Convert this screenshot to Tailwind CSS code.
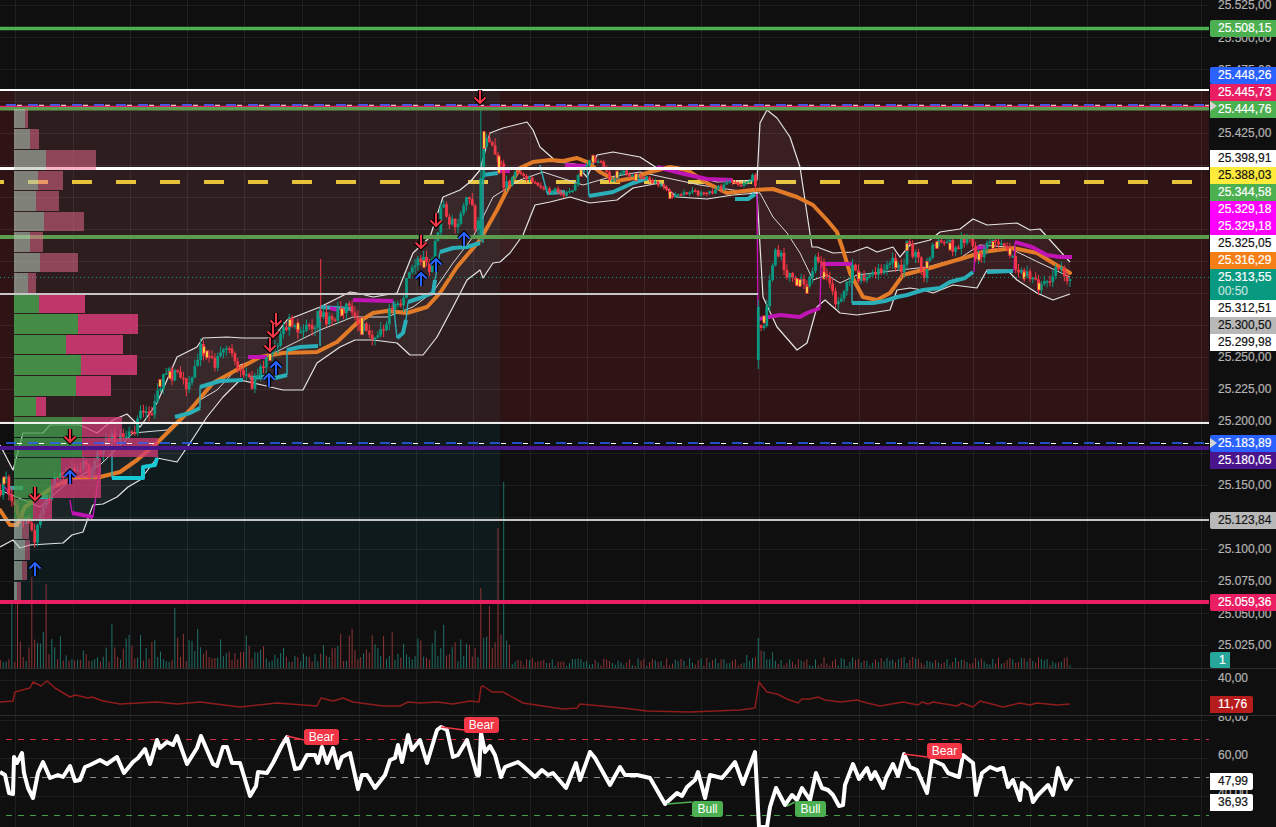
<!DOCTYPE html>
<html lang="en">
<head>
<meta charset="utf-8">
<title>Chart</title>
<script src="https://cdn.jsdelivr.net/npm/@tailwindcss/browser@4"></script>
</head>
<body class="bg-[#0f0f0f]">
<div class="w-[1276px] h-[827px] flex flex-col overflow-hidden bg-[#0f0f0f] font-['Liberation_Sans',Arial,sans-serif] text-[12px]">

  <!-- MAIN PANE -->
  <div class="h-[669px] flex border-b border-[#2e2e2e] shrink-0">
    <div class="w-[1210px] h-full relative">
      <svg class="block w-full h-full" viewBox="0 0 1210 668" xmlns="http://www.w3.org/2000/svg">
        <defs>
          <g id="adn"><path d="M0,-7V6M-5.5,0.5L0,6L5.5,0.5" fill="none" stroke="#000" stroke-width="4.4"/><path d="M0,-7V6M-5.5,0.5L0,6L5.5,0.5" fill="none" stroke="#f23645" stroke-width="2"/></g>
          <g id="aup"><path d="M0,7V-6M-5.5,-0.5L0,-6L5.5,-0.5" fill="none" stroke="#000" stroke-width="4.4"/><path d="M0,7V-6M-5.5,-0.5L0,-6L5.5,-0.5" fill="none" stroke="#2962ff" stroke-width="2"/></g>
        </defs>
        <!-- zones -->
        <rect x="0" y="91" width="1209" height="332" fill="#2f1416"/>
        <rect x="14" y="91" width="486" height="332" fill="#2e1d1f"/>
        <rect x="14" y="424" width="486" height="176" fill="#0f1a1d"/>
        <!-- grid -->
        <path stroke="#ffffff" stroke-opacity="0.07" d="M15.5 0V668M73.5 0V668M130.5 0V668M187.5 0V668M244.5 0V668M302.5 0V668M359.5 0V668M416.5 0V668M473.5 0V668M530.5 0V668M587.5 0V668M644.5 0V668M701.5 0V668M759.5 0V668M859.5 0V668M916.5 0V668M973.5 0V668M1030.5 0V668M1087.5 0V668M1144.5 0V668M1201.5 0V668"/>
        <path stroke="#ffffff" stroke-opacity="0.07" d="M0 5.5H1209M0 37.5H1209M0 69.5H1209M0 101.5H1209M0 133.5H1209M0 165.5H1209M0 197.5H1209M0 229.5H1209M0 261.5H1209M0 293.5H1209M0 325.5H1209M0 357.5H1209M0 389.5H1209M0 421.5H1209M0 453.5H1209M0 485.5H1209M0 517.5H1209M0 549.5H1209M0 581.5H1209M0 613.5H1209M0 645.5H1209"/>
        <!-- yellow dashes behind price -->
        <line x1="-16" x2="1192" y1="182" y2="182" stroke="#e8c33a" stroke-width="4" stroke-dasharray="20 24"/>
        <!-- bollinger fill and bands -->
        <polygon id="bbfill" fill="#ffffff" fill-opacity="0.05" points=""/>
        <polyline id="bbu" fill="none" stroke="#e4e4e4" stroke-width="1.2" stroke-linejoin="round" points="0,445 13,470 23,433 43,433 50,425 80,425 97,433 113,420 127,414 140,427 157,403 177,357 197,347 203,338 227,337 243,338 250,338 273,338 287,320 320,307 350,292 357,293 373,297 397,293 413,253 430,237 443,197 460,190 470,182 480,170 490,133 503,128 527,122 533,130 540,147 557,162 575,164 587,177 597,155 613,152 640,157 657,168 677,167 700,178 717,182 757,180 760,123 767,110 777,118 790,137 800,167 812,247 817,247 833,253 853,252 867,247 877,252 893,247 900,257 910,245 930,240 940,232 960,229 973,219 987,225 1017,223 1030,230 1040,229 1050,240 1070,262"/>
        <polyline id="bbl" fill="none" stroke="#e4e4e4" stroke-width="1.2" stroke-linejoin="round" points="0,547 13,540 20,548 30,545 63,543 72,535 83,532 90,513 93,505 103,504 117,497 128,487 140,480 157,458 177,462 190,443 207,417 223,397 240,380 262,385 283,390 303,390 317,363 340,347 355,340 373,340 397,343 410,355 423,355 437,337 453,307 467,280 480,270 483,278 493,263 500,262 510,253 523,235 535,205 550,202 570,197 590,203 617,200 633,188 660,183 677,197 707,199 733,195 757,193 763,297 777,327 797,350 807,343 817,307 825,300 840,313 857,315 877,312 890,310 897,290 910,288 923,290 933,293 953,285 977,288 987,270 1007,270 1017,280 1037,293 1053,300 1070,294"/>
        <polyline fill="none" stroke="#d8d8d8" stroke-width="1" stroke-linejoin="round" points="0,490 40,507 67,483 100,465 133,433 167,430 200,400 217,390 233,373 240,365 270,355 320,330 353,317 387,317 413,307 433,292 453,263 473,237 493,197 520,180 543,172 583,185 610,177 640,172 667,178 700,185 733,190 760,193 773,217 787,233 800,253 813,280 827,275 840,283 857,275 900,270 927,267 960,258 980,245 1007,247 1040,263 1070,277"/>
        <!-- orange average -->
        <polyline fill="none" stroke="#e27b28" stroke-width="4" stroke-linejoin="round" stroke-linecap="round" points="0,510 10,525 17,525 25,507 53,487 73,478 100,477 120,472 137,460 157,443 177,423 190,410 213,383 240,368 260,357 283,353 317,352 337,342 357,323 373,313 387,311 407,313 427,307 440,293 457,267 480,240 497,210 507,190 520,168 533,162 550,160 563,161 577,158 587,162 600,172 617,181 633,178 650,172 670,167 687,170 707,183 727,193 753,190 773,189 797,197 813,205 827,220 837,232 843,250 850,273 863,297 877,300 890,293 903,275 930,268 950,262 967,257 983,252 1013,248 1037,253 1053,263 1070,273"/>
        <!-- teal steps -->
        <g fill="none" stroke="#2aaeb8" stroke-linejoin="round">
          <path stroke-width="1.4" d="M200 408V387M287 375V350M320 346V307M393 301L397 338M406 320L408 302M435 280L440 252M483 243V175M540 165L547 193M589 196L587 166M852 264V303M112 443V478"/>
          <g stroke-width="4">
            <polyline points="10,488 23,488"/>
            <polyline points="30,497 48,497"/>
            <polyline stroke="#16c7d4" points="112,478 143,478 143,467 155,465 157,458"/>
            <polyline points="175,417 190,413 200,408"/>
            <polyline points="200,387 220,381 243,380"/>
            <polyline points="250,378 262,377 275,378 287,375"/>
            <polyline points="287,350 300,347 318,346"/>
            <polyline points="320,307 352,309"/>
            <polyline points="397,338 403,333 406,320"/>
            <polyline points="408,302 420,298 433,293 435,280"/>
            <polyline points="440,252 453,248 467,247 480,243"/>
            <polyline points="483,175 498,173"/>
            <polyline points="547,193 565,192"/>
            <polyline points="589,196 613,192 633,183 648,178"/>
            <polyline points="735,199 748,199 755,194"/>
            <polyline points="852,303 873,303 885,301 897,297 907,295 923,290 940,288 950,282 965,278 973,272"/>
            <polyline points="987,272 1013,271"/>
          </g>
        </g>
        <!-- magenta steps -->
        <g fill="none" stroke="#c014b4" stroke-linejoin="round">
          <path stroke-width="1.4" d="M5 487L12 498M70 500L72 513M93 517L100 467M757 194L758 319M820 308L821 264M974 272L975 248M1014 271L1015 242"/>
          <g stroke-width="4">
            <polyline points="72,513 93,517"/>
            <polyline points="248,357 267,357"/>
            <polyline points="330,308 338,310"/>
            <polyline points="353,300 393,301"/>
            <polyline points="500,171 510,171"/>
            <polyline points="565,165 587,166"/>
            <polyline points="657,167 680,173 707,179 732,180"/>
            <polyline points="758,319 780,315 800,317 807,313 820,308"/>
            <polyline points="821,264 852,264"/>
            <polyline points="975,248 987,247"/>
            <polyline points="1015,242 1032,247 1047,255 1060,257 1072,257"/>
          </g>
        </g>
        <!-- candles and volume are filled in from the data below -->
        <path id="wkg" fill="none" stroke="#089981" stroke-width="1"/>
        <path id="wkr" fill="none" stroke="#f23645" stroke-width="1"/>
        <path id="bdg" fill="#089981"/>
        <path id="bdr" fill="#f23645"/>
        <g id="yl"></g>
        <path id="vg" fill="none" stroke="#1e7068" stroke-width="1"/>
        <path id="vr" fill="none" stroke="#8f3436" stroke-width="1"/>
        <!-- top levels -->
        <line x1="0" x2="1209" y1="28.5" y2="28.5" stroke="#4caf50" stroke-width="3.4"/>
        <line x1="0" x2="1209" y1="90" y2="90" stroke="#ffffff" stroke-width="2"/>
        <line x1="6" x2="1209" y1="105" y2="105" stroke="#3d5af1" stroke-width="2" stroke-dasharray="10 12"/>
        <line x1="17" x2="1209" y1="105.4" y2="105.4" stroke="#f5e6e6" stroke-width="1.4" stroke-dasharray="5 17"/>
        <line x1="0" x2="1209" y1="106.4" y2="106.4" stroke="#e91e63" stroke-width="1.4"/>
        <line x1="0" x2="1209" y1="108.7" y2="108.7" stroke="#5d9c4f" stroke-width="3.6"/>
        <line x1="0" x2="1209" y1="168.5" y2="168.5" stroke="#ffffff" stroke-width="3"/>
        <line x1="0" x2="1209" y1="237" y2="237" stroke="#5d9c4f" stroke-width="4"/>
        <line x1="0" x2="1209" y1="277.5" y2="277.5" stroke="#089981" stroke-width="1" stroke-dasharray="1 3"/>
        <line x1="0" x2="758" y1="294" y2="294" stroke="#c6c6c6" stroke-width="2"/>
        <!-- volume profile -->
        <g fill="#b5c5b5" fill-opacity="0.6">
          <rect x="14" y="109" width="11" height="19"/><rect x="14" y="129" width="16" height="20"/><rect x="14" y="150" width="32" height="20"/><rect x="14" y="171" width="24" height="19"/><rect x="14" y="191" width="22" height="20"/><rect x="14" y="212" width="30" height="19"/><rect x="14" y="232" width="16" height="20"/><rect x="14" y="253" width="26" height="19"/><rect x="14" y="273" width="14" height="20"/>
          <rect x="14" y="521" width="8" height="18"/><rect x="14" y="540" width="11" height="20"/><rect x="14" y="561" width="8" height="19"/><rect x="14" y="582" width="3" height="18"/>
        </g>
        <g fill="#ee6e90" fill-opacity="0.5">
          <rect x="25" y="109" width="3" height="19"/><rect x="30" y="129" width="9" height="20"/><rect x="46" y="150" width="50" height="20"/><rect x="38" y="171" width="25" height="19"/><rect x="36" y="191" width="23" height="20"/><rect x="44" y="212" width="40" height="19"/><rect x="30" y="232" width="13" height="20"/><rect x="40" y="253" width="38" height="19"/><rect x="28" y="273" width="8" height="20"/>
          <rect x="22" y="521" width="7" height="18"/><rect x="25" y="540" width="5" height="20"/><rect x="22" y="561" width="5" height="19"/><rect x="17" y="582" width="4" height="18"/>
        </g>
        <g fill="#479d4b">
          <rect x="14" y="295" width="25" height="18" fill-opacity="0.87"/><rect x="14" y="314" width="64" height="20" fill-opacity="0.87"/><rect x="14" y="335" width="52" height="19" fill-opacity="0.87"/><rect x="14" y="355" width="67" height="20" fill-opacity="0.87"/><rect x="14" y="376" width="62" height="20" fill-opacity="0.87"/><rect x="14" y="397" width="22" height="19" fill-opacity="0.87"/>
          <g fill-opacity="0.76"><rect x="14" y="417" width="68" height="20"/><rect x="14" y="438" width="68" height="19"/><rect x="14" y="458" width="47" height="20"/><rect x="14" y="479" width="37" height="19"/><rect x="14" y="499" width="19" height="20"/></g>
        </g>
        <g fill="#d43b75">
          <rect x="39" y="295" width="46" height="18" fill-opacity="0.87"/><rect x="78" y="314" width="60" height="20" fill-opacity="0.87"/><rect x="66" y="335" width="57" height="19" fill-opacity="0.87"/><rect x="81" y="355" width="56" height="20" fill-opacity="0.87"/><rect x="76" y="376" width="35" height="20" fill-opacity="0.87"/><rect x="36" y="397" width="10" height="19" fill-opacity="0.87"/>
          <g fill-opacity="0.76"><rect x="82" y="417" width="40" height="20"/><rect x="82" y="438" width="76" height="19"/><rect x="61" y="458" width="40" height="20"/><rect x="51" y="479" width="50" height="19"/><rect x="33" y="499" width="19" height="20"/></g>
        </g>
        <!-- lower levels -->
        <line x1="0" x2="1209" y1="423" y2="423" stroke="#ffffff" stroke-opacity="0.92" stroke-width="2"/>
        <line x1="6" x2="1209" y1="443" y2="443" stroke="#2962ff" stroke-width="1.6" stroke-dasharray="10 12"/>
        <line x1="17" x2="1209" y1="443.5" y2="443.5" stroke="#ffffff" stroke-width="1.2" stroke-dasharray="5 17"/>
        <line x1="0" x2="1209" y1="448" y2="448" stroke="#4a148c" stroke-width="4"/>
        <line x1="0" x2="1209" y1="520" y2="520" stroke="#c6c6c6" stroke-width="2"/>
        <line x1="0" x2="1209" y1="602" y2="602" stroke="#e91e63" stroke-width="4"/>
        <!-- signal arrows -->
        <use href="#adn" x="70" y="436"/><use href="#aup" x="70" y="477"/>
        <use href="#adn" x="35" y="494"/><use href="#aup" x="35" y="569"/>
        <use href="#adn" x="276" y="320"/><use href="#adn" x="273" y="331"/><use href="#adn" x="270" y="345"/>
        <use href="#aup" x="276" y="368"/><use href="#aup" x="269" y="380"/>
        <use href="#adn" x="421" y="242"/><use href="#aup" x="421" y="279"/>
        <use href="#adn" x="436" y="220"/><use href="#aup" x="436" y="265"/>
        <use href="#aup" x="464" y="239"/><use href="#adn" x="480" y="97"/>
      </svg>
    </div>
    <div class="w-[66px] h-full relative overflow-hidden text-[#b2b2b2] [-webkit-text-stroke:0.2px]">
      <div class="absolute top-[-3px] left-2 leading-[17px]">25.525,00</div>
      <div class="absolute top-[30px] left-2 leading-[17px]">25.500,00</div>
      <div class="absolute top-[62px] left-2 leading-[17px]">25.475,00</div>
      <div class="absolute top-[125px] left-2 leading-[17px]">25.425,00</div>
      <div class="absolute top-[349px] left-2 leading-[17px]">25.250,00</div>
      <div class="absolute top-[381px] left-2 leading-[17px]">25.225,00</div>
      <div class="absolute top-[413px] left-2 leading-[17px]">25.200,00</div>
      <div class="absolute top-[477px] left-2 leading-[17px]">25.150,00</div>
      <div class="absolute top-[541px] left-2 leading-[17px]">25.100,00</div>
      <div class="absolute top-[573px] left-2 leading-[17px]">25.075,00</div>
      <div class="absolute top-[606px] left-2 leading-[17px]">25.050,00</div>
      <div class="absolute top-[637px] left-2 leading-[17px]">25.025,00</div>
      <div class="absolute inset-0 flex flex-col leading-[17px] font-normal">
        <div class="h-[17px] pl-2 mt-[20px] bg-[#4caf50] text-white rounded-l-[2px]">25.508,15</div>
        <div class="h-[17px] pl-2 mt-[30px] bg-[#2962ff] text-white rounded-l-[2px]">25.448,26</div>
        <div class="h-[17px] pl-2 bg-[#e91e63] text-white">25.445,73</div>
        <div class="h-[17px] pl-2 bg-[#4caf50] text-white">25.444,76</div>
        <div class="h-[17px] pl-2 mt-[32px] bg-white text-[#131313]">25.398,91</div>
        <div class="h-[17px] pl-2 bg-[#ffeb3b] text-[#131313]">25.388,03</div>
        <div class="h-[17px] pl-2 bg-[#4caf50] text-white">25.344,58</div>
        <div class="h-[17px] pl-2 bg-[#ff00ff] text-white">25.329,18</div>
        <div class="h-[17px] pl-2 bg-[#ff00ff] text-white">25.329,18</div>
        <div class="h-[17px] pl-2 bg-white text-[#131313]">25.325,05</div>
        <div class="h-[17px] pl-2 bg-[#f57f17] text-white">25.316,29</div>
        <div class="h-[31px] pl-2 bg-[#089981] text-white leading-[14px] pt-[1px]">25.313,55<div class="text-white/70">00:50</div></div>
        <div class="h-[17px] pl-2 bg-white text-[#131313]">25.312,51</div>
        <div class="h-[17px] pl-2 bg-[#b8b8b8] text-[#131313]">25.300,50</div>
        <div class="h-[17px] pl-2 bg-white text-[#131313]">25.299,98</div>
        <div class="h-[17px] pl-2 mt-[84px] bg-[#2962ff] text-white rounded-l-[2px]">25.183,89</div>
        <div class="h-[17px] pl-2 bg-[#4a148c] text-white">25.180,05</div>
        <div class="h-[17px] pl-2 mt-[43px] bg-[#b8b8b8] text-[#131313] rounded-l-[2px]">25.123,84</div>
        <div class="h-[17px] pl-2 mt-[65px] bg-[#e91e63] text-white rounded-l-[2px]">25.059,36</div>
        <div class="h-[16px] w-[20px] pl-[9px] mt-[41px] bg-[#26a69a] text-white leading-[16px] rounded-l-[2px]">1</div>
      </div>
      <svg class="absolute left-0 top-[101px] w-[7px] h-[10px]" viewBox="0 0 7 10"><path d="M0 0L7 5L0 10Z" fill="#d4d4d4"/></svg>
      <svg class="absolute left-0 top-[438px] w-[7px] h-[10px]" viewBox="0 0 7 10"><path d="M0 0L7 5L0 10Z" fill="#d4d4d4"/></svg>
    </div>
  </div>

  <!-- ATR PANE -->
  <div class="h-[47px] flex border-b border-[#2e2e2e] shrink-0">
    <div class="w-[1210px] h-full">
      <svg class="block w-full h-full" viewBox="0 669 1210 46" xmlns="http://www.w3.org/2000/svg">
        <path stroke="#ffffff" stroke-opacity="0.07" d="M15.5 669V715M73.5 669V715M130.5 669V715M187.5 669V715M244.5 669V715M302.5 669V715M359.5 669V715M416.5 669V715M473.5 669V715M530.5 669V715M587.5 669V715M644.5 669V715M701.5 669V715M759.5 669V715M859.5 669V715M916.5 669V715M973.5 669V715M1030.5 669V715M1087.5 669V715M1144.5 669V715M1201.5 669V715M0 680.5H1209"/>
        <polyline fill="none" stroke="#8e1c1c" stroke-width="1.5" stroke-linejoin="round" points="0,702 13,701 15,692 30,688 33,682 41,686 47,681 55,688 70,697 75,695 88,698 92,697 103,701 120,704 157,702 177,704 200,702 240,707 277,703 317,706 321,698 333,701 343,698 353,702 383,706 400,706 408,702 420,703 437,702 453,704 470,701 479,702 481,687 483,686 492,692 503,692 523,703 563,709 577,708 580,704 623,708 647,711 690,712 740,710 755,708 759,682 767,692 777,694 787,699 798,703 802,699 810,699 818,697 825,700 840,702 857,700 867,703 880,706 903,702 918,705 922,702 928,704 933,702 957,706 962,703 973,707 980,701 1003,707 1020,703 1030,705 1037,703 1057,705 1070,704"/>
      </svg>
    </div>
    <div class="w-[66px] h-full relative overflow-hidden text-[#b2b2b2] leading-[17px] [-webkit-text-stroke:0.2px]">
      <div class="absolute top-[1px] left-2">40,00</div>
      <div class="absolute top-[27px] left-0 w-[43px] h-[17px] pl-2 bg-[#b71c1c] text-white rounded-r-[2px]">11,76</div>
    </div>
  </div>

  <!-- RSI PANE -->
  <div class="flex-1 flex min-h-0">
    <div class="w-[1210px] h-full relative">
      <svg class="block w-full h-full" viewBox="0 716 1210 111" xmlns="http://www.w3.org/2000/svg">
        <path stroke="#ffffff" stroke-opacity="0.07" d="M15.5 716V827M73.5 716V827M130.5 716V827M187.5 716V827M244.5 716V827M302.5 716V827M359.5 716V827M416.5 716V827M473.5 716V827M530.5 716V827M587.5 716V827M644.5 716V827M701.5 716V827M759.5 716V827M859.5 716V827M916.5 716V827M973.5 716V827M1030.5 716V827M1087.5 716V827M1144.5 716V827M1201.5 716V827M0 720.5H1209M0 758.5H1209M0 796.5H1209"/>
        <line x1="6" x2="1209" y1="739.5" y2="739.5" stroke="#f23645" stroke-opacity="0.85" stroke-width="1" stroke-dasharray="6 6"/>
        <line x1="6" x2="1209" y1="777.5" y2="777.5" stroke="#8e8e8e" stroke-width="1" stroke-dasharray="6 6"/>
        <line x1="6" x2="1209" y1="815.5" y2="815.5" stroke="#4caf50" stroke-opacity="0.9" stroke-width="1" stroke-dasharray="6 6"/>
        <polyline fill="none" stroke="#ffffff" stroke-width="4" stroke-linejoin="round" points="0,772 5,775 9,793 13,794 14,757 17,763 22,753 24,773 28,788 33,798 38,773 43,762 50,778 58,775 63,777 70,766 75,781 80,780 85,767 90,765 100,760 107,764 117,757 124,773 133,762 138,758 145,749 150,764 157,740 160,748 167,742 173,745 177,736 187,764 197,748 201,736 213,764 217,766 223,747 227,747 232,763 240,763 250,796 256,786 258,772 267,773 273,763 282,745 287,737 295,769 300,768 307,755 315,755 318,763 322,747 327,763 333,748 338,768 342,757 350,753 358,789 362,775 367,775 375,788 385,775 390,760 395,758 398,745 402,762 408,735 412,750 420,740 427,763 437,730 441,727 447,730 453,757 458,755 467,740 477,775 479,775 481,733 485,752 490,746 495,755 501,777 505,767 518,762 523,766 535,777 542,770 548,775 553,773 566,788 576,763 580,780 590,752 595,758 610,785 620,767 625,775 637,775 650,778 665,804 677,793 682,796 687,787 695,780 698,772 705,798 710,775 722,778 727,772 735,762 743,784 755,752 759,827 767,827 770,807 776,788 785,805 792,795 797,800 802,788 810,800 816,773 822,788 828,790 833,795 839,806 843,805 845,785 853,764 859,779 867,768 871,779 875,772 883,788 886,778 893,764 898,776 904,754 910,767 917,770 927,793 932,760 943,765 948,773 959,777 963,755 973,763 976,795 982,773 990,767 997,770 1003,768 1008,787 1013,780 1020,800 1022,783 1030,790 1033,802 1038,795 1048,785 1053,795 1058,768 1066,789 1072,779"/>
        <path fill="none" stroke="#f23645" stroke-width="1.5" d="M287 736L304 740M441 727L464 730M904 754L927 757"/>
        <path fill="none" stroke="#4caf50" stroke-width="1.5" d="M667 804L692 802M787 806L795 802"/>
      </svg>
      <div class="absolute left-[304px] top-[13px] w-[35px] h-[16px] rounded-[3px] bg-[#f23645] text-white text-center leading-[16px]">Bear</div>
      <div class="absolute left-[464px] top-[1px] w-[35px] h-[16px] rounded-[3px] bg-[#f23645] text-white text-center leading-[16px]">Bear</div>
      <div class="absolute left-[927px] top-[27px] w-[35px] h-[16px] rounded-[3px] bg-[#f23645] text-white text-center leading-[16px]">Bear</div>
      <div class="absolute left-[692px] top-[85px] w-[31px] h-[16px] rounded-[3px] bg-[#4caf50] text-white text-center leading-[16px]">Bull</div>
      <div class="absolute left-[795px] top-[85px] w-[31px] h-[16px] rounded-[3px] bg-[#4caf50] text-white text-center leading-[16px]">Bull</div>
    </div>
    <div class="w-[66px] h-full relative overflow-hidden text-[#b2b2b2] leading-[17px] [-webkit-text-stroke:0.2px]">
      <div class="absolute top-[-7px] left-2">80,00</div>
      <div class="absolute top-[31px] left-2">60,00</div>
      <div class="absolute top-[69px] left-2">40,00</div>
      <div class="absolute top-[57px] left-0 w-[43px] h-[17px] pl-2 bg-white text-[#131313] rounded-r-[2px]">47,99</div>
      <div class="absolute top-[78px] left-0 w-[43px] h-[17px] pl-2 bg-white text-[#131313] rounded-r-[2px]">36,93</div>
    </div>
  </div>
</div>

<script>
(function () {
  var $ = function (id) { return document.getElementById(id); };
  var lo = $('bbl').getAttribute('points').trim().split(/\s+/).reverse().join(' ');
  $('bbfill').setAttribute('points', $('bbu').getAttribute('points') + ' ' + lo);

  var path = [[0,490],[5,478],[10,490],[14,505],[29,520],[33,545],[37,525],[42,510],[50,490],[65,470],[80,465],[90,475],[100,450],[110,435],[120,440],[130,435],[143,413],[150,420],[157,400],[160,383],[170,375],[177,370],[187,387],[193,373],[202,347],[213,363],[222,353],[233,357],[245,370],[253,383],[258,370],[267,363],[277,343],[290,323],[307,330],[322,313],[327,320],[340,313],[353,307],[357,323],[373,333],[383,327],[393,307],[403,297],[410,267],[423,263],[430,270],[437,240],[442,207],[450,223],[460,217],[468,197],[477,230],[481,200],[484,140],[493,150],[500,167],[505,190],[513,173],[517,170],[533,183],[540,190],[553,190],[568,195],[577,180],[590,157],[600,163],[610,180],[623,170],[633,177],[647,178],[663,187],[670,195],[687,192],[707,193],[720,187],[733,183],[743,187],[755,173],[759,340],[767,307],[770,283],[777,247],[783,263],[790,280],[800,283],[807,290],[815,263],[820,257],[825,280],[833,293],[840,307],[847,287],[853,267],[860,277],[870,270],[883,273],[893,263],[903,267],[907,247],[917,257],[923,277],[933,247],[947,240],[953,253],[963,237],[970,235],[977,260],[983,250],[997,243],[1007,243],[1013,260],[1020,277],[1030,273],[1037,287],[1050,283],[1060,263],[1067,287],[1070,280]];
  function at(x) {
    for (var k = 1; k < path.length; k++) {
      if (x <= path[k][0]) {
        var a = path[k-1], b = path[k];
        return a[1] + (b[1]-a[1]) * (x-a[0]) / (b[0]-a[0]);
      }
    }
    return path[path.length-1][1];
  }
  var s = 20240117;
  function rnd() {
    s |= 0; s = s + 0x6D2B79F5 | 0;
    var t = Math.imul(s ^ s >>> 15, 1 | s);
    t = t + Math.imul(t ^ t >>> 7, 61 | t) ^ t;
    return ((t ^ t >>> 14) >>> 0) / 4294967296;
  }
  var step = 2.86, wg = '', wr = '', bg = '', br = '', vg = '', vr = '';
  var tall = [[13,68,1],[18,64,0],[33,91,0],[46,84,0],[112,44,1],[175,60,1],[482,80,0],[490,62,0],[498,140,0],[504,186,1],[759,30,1]];
  var prev = at(0);
  for (var i = Math.floor(1070 / step); i >= 0; i--) {
    var x = 1070 - i * step;
    var vol = x < 510 ? 15 : x < 755 ? 6 : 13;
    var c = at(x) + (rnd() - 0.5) * vol;
    var o = prev;
    var h = Math.min(o, c) - rnd() * (vol * 0.45) - 0.5;
    var l = Math.max(o, c) + rnd() * (vol * 0.45) + 0.5;
    if (Math.abs(x - 758.3) < 1) { o = 360; c = 307; h = 300; l = 369; }
    if (Math.abs(x - 481.4) < 1.5) { o = 240; c = 178; h = 110; l = 242; }
    if (x > 320 && x < 323.5) { h = 259; }
    var up = c < o;
    var top = Math.min(o, c), ht = Math.max(Math.abs(o - c), 1.5);
    var X = x.toFixed(1);
    var wick = 'M' + X + ' ' + h.toFixed(1) + 'V' + l.toFixed(1);
    var body = 'M' + (x - 1.4).toFixed(1) + ' ' + top.toFixed(1) + 'h2.8v' + ht.toFixed(1) + 'h-2.8z';
    if (up) { wg += wick; bg += body; } else { wr += wick; br += body; }
    prev = c;
    if (Math.abs(x - 758.3) < 1) prev = 325;
    var env = x < 480 ? 6 + rnd() * rnd() * 42 : x < 510 ? 10 + rnd() * 30 : x < 745 ? 2 + rnd() * 8 : x < 775 ? 3 + rnd() * 16 : 2 + rnd() * 9;
    var green = up;
    for (var t = 0; t < tall.length; t++) if (Math.abs(x - tall[t][0]) < 1.45) { env = tall[t][1]; green = !!tall[t][2]; }
    var vb = 'M' + X + ' 668V' + (668 - env).toFixed(1);
    if (green) vg += vb; else vr += vb;
  }
  $('wkg').setAttribute('d', wg); $('wkr').setAttribute('d', wr);
  $('bdg').setAttribute('d', bg); $('bdr').setAttribute('d', br);
  $('vg').setAttribute('d', vg);  $('vr').setAttribute('d', vr);

  var marks = [4,160,170,204,207,270,290,298,342,362,424,484,499,581,593,617,636,670,764,797,800,807,824,859,896,907,927,937,950,979,993,1010,1024,1039];
  var yl = '';
  marks.forEach(function (mx) {
    var big = mx === 484 || mx === 499 || mx === 362;
    var hh = big ? 16 : 6;
    var my = at(mx);
    yl += '<rect x="' + (mx-1.5) + '" y="' + (my-hh/2-1).toFixed(1) + '" width="3" height="' + (hh+2) + '" fill="#f23645"/>' +
          '<rect x="' + (mx-0.8) + '" y="' + (my-hh/2).toFixed(1) + '" width="1.6" height="' + hh + '" fill="#ffeb3b"/>';
  });
  $('yl').innerHTML = yl;
})();
</script>
</body>
</html>
